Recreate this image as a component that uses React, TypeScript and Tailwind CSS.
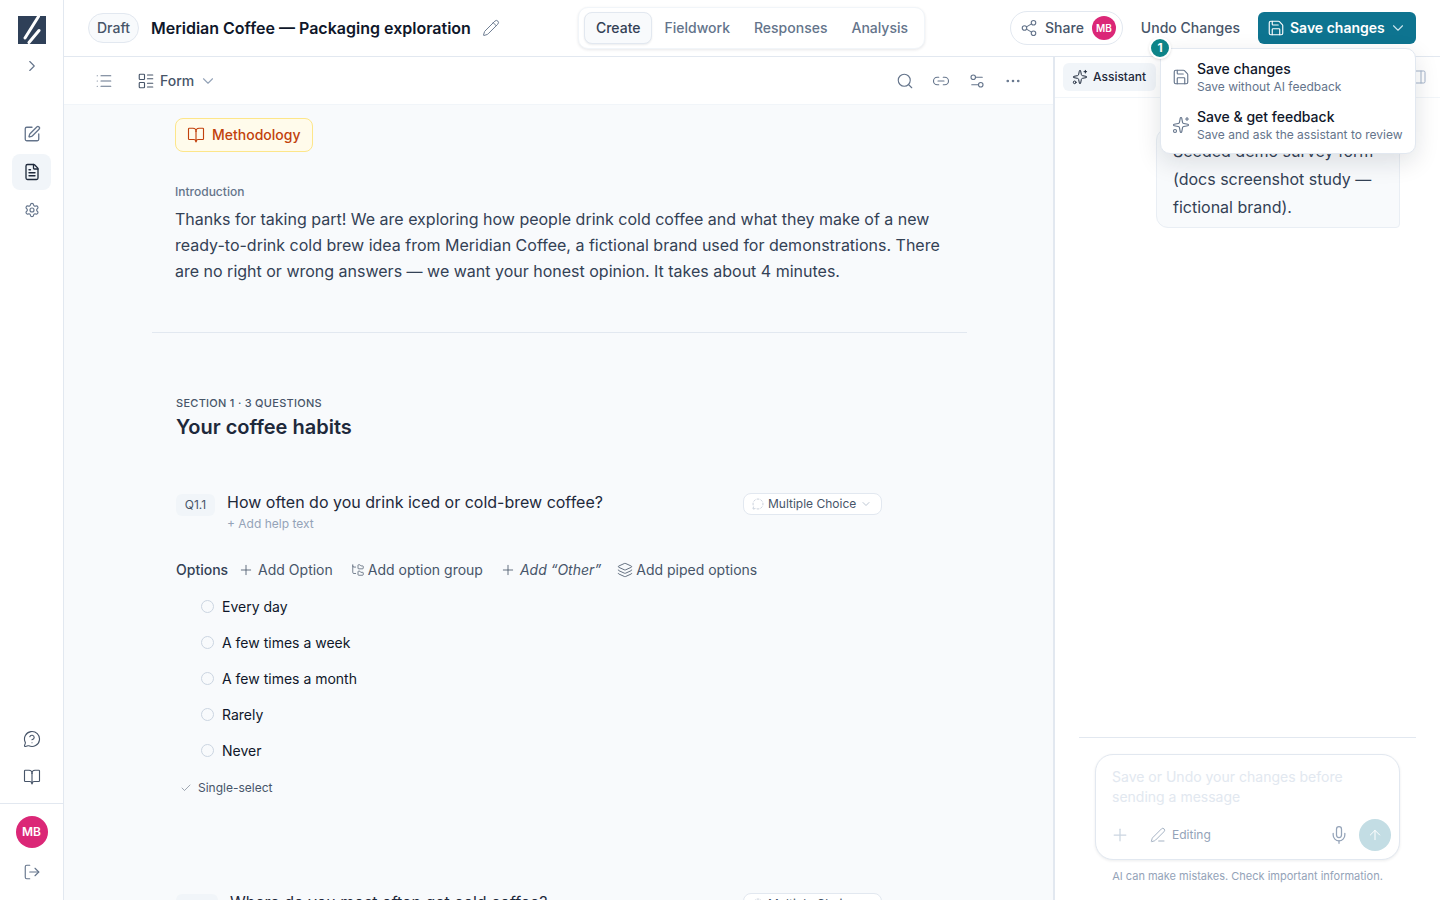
import {
  ArrowUp,
  BookOpen,
  Check,
  ChevronDown,
  ChevronRight,
  Ellipsis,
  FileText,
  FolderTree,
  Layers,
  LayoutList,
  Link2,
  List,
  LogOut,
  MessageCircleDashed,
  MessageCircleQuestion,
  Mic,
  PanelRight,
  PenLine,
  Pencil,
  Plus,
  Save,
  Search,
  Settings,
  Settings2,
  Share2,
  Sparkles,
  SquarePen,
} from "lucide-react";

const options = ["Every day", "A few times a week", "A few times a month", "Rarely", "Never"];

function Logo() {
  return (
    <svg width="28" height="28" viewBox="0 0 28 28" className="block">
      <rect width="28" height="28" fill="#2f4058" />
      <path d="M7 22 L20.5 0.5 M11 26.5 L21 14.5" stroke="#fff" strokeWidth="3" strokeLinecap="round" fill="none" />
    </svg>
  );
}

function Sidebar() {
  return (
    <aside className="flex h-full w-16 shrink-0 flex-col items-center border-r border-[#e2e8f0] bg-white">
      <div className="mt-4"><Logo /></div>
      <ChevronRight className="mt-[13px] h-[18px] w-[18px] text-[#64748b]" strokeWidth={1.5} />
      <div className="mt-[41px] flex flex-col items-center gap-[2px]">
        <div className="flex h-9 w-[39px] items-center justify-center">
          <SquarePen className="h-[18px] w-[18px] text-[#64748b]" strokeWidth={1.75} />
        </div>
        <div className="flex h-9 w-[39px] items-center justify-center rounded-lg bg-[#f1f5f9]">
          <FileText className="h-[18px] w-[18px] text-[#1e293b]" strokeWidth={1.75} />
        </div>
        <div className="flex h-9 w-[39px] items-center justify-center">
          <Settings className="h-4 w-4 text-[#64748b]" strokeWidth={1.75} />
        </div>
      </div>
      <div className="mt-auto flex flex-col items-center gap-5 pb-[17px]">
        <MessageCircleQuestion className="h-[18px] w-[18px] text-[#475569]" strokeWidth={1.5} />
        <BookOpen className="h-[18px] w-[18px] text-[#475569]" strokeWidth={1.5} />
      </div>
      <div className="flex h-[97px] w-full flex-col items-center border-t border-[#e2e8f0] pt-3">
        <div className="flex h-8 w-8 items-center justify-center rounded-full bg-[#db2777] text-xs font-semibold text-white">MB</div>
        <LogOut className="mt-[15px] h-[18px] w-[18px] text-[#64748b]" strokeWidth={1.5} />
      </div>
    </aside>
  );
}

function TopBar() {
  return (
    <header className="relative flex h-[57px] shrink-0 items-center border-b border-[#e2e8f0] bg-white pl-6 pr-6">
      <span className="flex h-[30px] items-center rounded-full border border-[#e2e8f0] bg-[#f8fafc] px-2 text-sm font-medium text-[#475569]">Draft</span>
      <h1 className="ml-3 text-base font-semibold text-[#0f172a]">Meridian Coffee — Packaging exploration</h1>
      <Pencil className="ml-[11px] h-[18px] w-[18px] text-[#64748b]" strokeWidth={1.25} />
      <nav className="ml-[78px] flex h-[42px] items-center rounded-[10px] border border-[#f1f5f9] bg-white pl-[5px] pr-[4px] text-sm font-medium text-[#64748b] shadow-[0_1px_3px_rgba(15,23,42,0.1)]">
        <span className="flex h-8 items-center rounded-lg border border-[#e2e8f0] bg-[#f8fafc] px-[11px] text-[#334155] shadow-[0_1px_2px_rgba(15,23,42,0.08)]">Create</span>
        <span className="px-3">Fieldwork</span>
        <span className="px-3">Responses</span>
        <span className="px-3">Analysis</span>
      </nav>
      <div className="ml-auto flex items-center">
        <div className="flex h-[34px] items-center rounded-full border border-[#e2e8f0] bg-white pl-[9px] pr-[6px] text-sm font-medium text-[#475569]">
          <Share2 className="h-[18px] w-[18px] text-[#64748b]" strokeWidth={1.5} />
          <span className="ml-[7px]">Share</span>
          <span className="ml-2 flex h-6 w-6 items-center justify-center rounded-full bg-[#db2777] text-[10px] font-semibold text-white">MB</span>
        </div>
        <span className="ml-[18px] text-sm font-medium text-[#475569]">Undo Changes</span>
        <button type="button" className="ml-[18px] flex h-8 w-[158px] items-center rounded-md bg-[#0e7490] pl-[9px] text-sm font-semibold text-white">
          <Save className="h-[18px] w-[18px]" strokeWidth={1.5} />
          <span className="ml-[5px]">Save changes</span>
          <ChevronDown className="ml-[4px] h-[18px] w-[18px] text-[#cbe4ec]" strokeWidth={1.5} />
        </button>
      </div>
    </header>
  );
}

function SaveMenu() {
  return (
    <div className="absolute right-6 top-[48px] z-20 h-[106px] w-[256px] rounded-[10px] border border-[#e2e8f0] bg-white px-[11px] pt-[4px] shadow-[0_8px_24px_rgba(15,23,42,0.12)]">
      <span className="absolute -left-[12px] -top-[12px] flex h-[22px] w-[22px] items-center justify-center rounded-full border-2 border-white bg-[#0d8488] text-xs font-bold text-white shadow">1</span>
      <div className="flex h-12 items-center">
        <Save className="h-[18px] w-[18px] shrink-0 text-[#64748b]" strokeWidth={1.5} />
        <div className="ml-[7px]">
          <p className="text-sm font-medium leading-[18px] text-[#0f172a]">Save changes</p>
          <p className="mt-[1px] text-xs leading-[15px] text-[#64748b]">Save without AI feedback</p>
        </div>
      </div>
      <div className="flex h-12 items-center">
        <Sparkles className="h-[18px] w-[18px] shrink-0 text-[#64748b]" strokeWidth={1.5} />
        <div className="ml-[7px]">
          <p className="text-sm font-medium leading-[18px] text-[#0f172a]">Save &amp; get feedback</p>
          <p className="mt-[1px] whitespace-nowrap text-xs leading-[15px] text-[#64748b]">Save and ask the assistant to review</p>
        </div>
      </div>
    </div>
  );
}

function Toolbar() {
  return (
    <div className="flex h-12 shrink-0 items-center border-b border-[#f1f5f9] bg-white pl-[31px] pr-[31px]">
      <List className="h-[18px] w-[18px] text-[#64748b]" strokeWidth={1.5} />
      <LayoutList className="ml-6 h-[18px] w-[18px] text-[#475569]" strokeWidth={1.5} />
      <span className="ml-[5px] text-sm font-medium text-[#475569]">Form</span>
      <ChevronDown className="ml-[5px] h-[18px] w-[18px] text-[#94a3b8]" strokeWidth={1.5} />
      <div className="ml-auto flex items-center gap-[18px] text-[#64748b]">
        <Search className="h-[18px] w-[18px]" strokeWidth={1.5} />
        <Link2 className="h-[18px] w-[18px]" strokeWidth={1.5} />
        <Settings2 className="h-[18px] w-[18px]" strokeWidth={1.5} />
        <Ellipsis className="h-[18px] w-[18px]" strokeWidth={1.5} />
      </div>
    </div>
  );
}

function TypeSelect() {
  return (
    <div className="flex h-[22px] w-[139px] shrink-0 items-center rounded-lg border border-[#e2e8f0] bg-white pl-2 text-xs text-[#475569]">
      <MessageCircleDashed className="h-3 w-3 text-[#94a3b8]" strokeWidth={1} />
      <span className="ml-[4px]">Multiple Choice</span>
      <ChevronDown className="ml-1 h-3 w-3 text-[#94a3b8]" strokeWidth={1.25} />
    </div>
  );
}

function FormPane() {
  return (
    <div className="flex min-w-0 flex-1 flex-col overflow-hidden bg-[#f8fafc]">
      <Toolbar />
      <div className="min-h-0 flex-1 overflow-hidden pl-[88px]">
        <div className="w-[815px]">
          <div className="pl-[23px] pt-[13px]">
            <span className="inline-flex h-[34px] items-center rounded-lg border border-[#fde68a] bg-[#fffbeb] pl-[11px] pr-3 text-sm font-medium text-[#c2410c]">
              <BookOpen className="h-[18px] w-[18px]" strokeWidth={1.5} />
              <span className="ml-[7px]">Methodology</span>
            </span>
            <p className="mt-[32px] text-xs font-medium leading-4 text-[#64748b]">Introduction</p>
            <p className="mt-[6px] w-[780px] text-base leading-[26px] text-[#334155]">
              Thanks for taking part! We are exploring how people drink cold coffee and what they make of a new ready-to-drink cold brew idea from Meridian Coffee, a fictional brand used for demonstrations. There are no right or wrong answers — we want your honest opinion. It takes about 4 minutes.
            </p>
          </div>
          <div className="mt-[48px] border-t border-[#e2e8f0]" />
          <div className="pl-6 pt-[64px]">
            <p className="text-[11px] font-medium uppercase leading-3 tracking-[0.025em] text-[#475569]">Section 1 · 3 questions</p>
            <h2 className="mt-[4px] text-xl font-semibold leading-7 text-[#1e293b]">Your coffee habits</h2>

            <div className="mt-[49px] flex w-[706px] items-start">
              <span className="mt-[4px] flex h-[22px] w-[39px] shrink-0 items-center justify-center rounded-md bg-[#f1f5f9] text-xs text-[#475569]">Q1.1</span>
              <div className="ml-3 flex-1">
                <p className="text-base leading-6 text-[#1e293b]">How often do you drink iced or cold-brew coffee?</p>
                <p className="mt-[2px] text-xs leading-4 text-[#94a3b8]">+ Add help text</p>
              </div>
              <div className="mt-[3px]"><TypeSelect /></div>
            </div>

            <div className="mt-[28px] flex h-5 items-center text-sm text-[#475569]">
              <span className="font-medium text-[#334155]">Options</span>
              <Plus className="ml-[10px] h-4 w-4" strokeWidth={1.25} />
              <span className="ml-[4px]">Add Option</span>
              <FolderTree className="ml-[18px] h-[14px] w-[14px]" strokeWidth={1.25} />
              <span className="ml-[3px]">Add option group</span>
              <Plus className="ml-[17px] h-4 w-4" strokeWidth={1.25} />
              <span className="ml-[4px] italic">Add “Other”</span>
              <Layers className="ml-[16px] h-4 w-4" strokeWidth={1.25} />
              <span className="ml-[3px]">Add piped options</span>
            </div>

            <ul className="mt-[9px] pl-[25px]">
              {options.map((o) => (
                <li key={o} className="flex h-9 items-center">
                  <span className="-mt-[2px] h-[13px] w-[13px] rounded-full border border-[#cbd5e1]" />
                  <span className="ml-[8px] text-sm text-[#0f172a]">{o}</span>
                </li>
              ))}
            </ul>

            <div className="mt-[9px] flex h-5 items-center pl-1 text-xs text-[#475569]">
              <Check className="h-3 w-3" strokeWidth={1} />
              <span className="ml-[6px]">Single-select</span>
            </div>

            <div className="mt-[92px] flex w-[706px] items-start">
              <span className="mt-[4px] flex h-[22px] w-[42px] shrink-0 items-center justify-center rounded-md bg-[#f1f5f9] text-xs text-[#475569]">Q1.2</span>
              <div className="ml-3 flex-1">
                <p className="text-base leading-6 text-[#1e293b]">Where do you most often get cold coffee?</p>
              </div>
              <div className="mt-[3px]"><TypeSelect /></div>
            </div>
          </div>
        </div>
      </div>
    </div>
  );
}

function AssistantPane() {
  return (
    <section className="flex h-full w-[387px] shrink-0 flex-col border-l-2 border-[#e2e8f0] bg-white">
      <div className="flex h-[41px] shrink-0 items-center justify-between border-b border-[#f1f5f9] pl-2 pr-[13px]">
        <span className="flex h-7 items-center rounded-md bg-[#f1f5f9] pl-[9px] pr-[10px] text-xs font-medium text-[#1e293b]">
          <Sparkles className="h-4 w-4" strokeWidth={1.5} />
          <span className="ml-[5px]">Assistant</span>
        </span>
        <PanelRight className="h-4 w-4 text-[#a3b3c9]" strokeWidth={1.5} />
      </div>
      <div className="flex-1 pr-10 pt-[30px]">
        <div className="ml-auto w-[244px] rounded-xl rounded-br-sm border border-[#e9eef4] bg-[#f8fafc] px-4 pb-[6px] pt-2 text-base leading-[28px] text-[#334155]">
          Seeded demo survey form (docs screenshot study — fictional brand).
        </div>
      </div>
      <div className="mx-6 border-t border-[#e2e8f0] pl-4 pr-4 pt-4">
        <div className="h-[106px] rounded-[18px] border border-[#e2e8f0] bg-white shadow-[0_1px_3px_rgba(15,23,42,0.08)]">
          <p className="px-4 pt-3 text-sm leading-5 text-[#e2e8f0]">Save or Undo your changes before sending a message</p>
          <div className="mt-3 flex items-center pl-[14px] pr-2">
            <Plus className="h-5 w-5 text-[#cbd5e1]" strokeWidth={1.5} />
            <PenLine className="ml-5 h-4 w-4 text-[#94a3b8]" strokeWidth={1.25} />
            <span className="ml-[6px] text-xs text-[#94a3b8]">Editing</span>
            <Mic className="ml-auto h-5 w-5 text-[#94a3b8]" strokeWidth={1.5} />
            <span className="ml-[10px] flex h-8 w-8 items-center justify-center rounded-full bg-[#c3dde4]">
              <ArrowUp className="h-4 w-4 text-white" strokeWidth={1.5} />
            </span>
          </div>
        </div>
        <p className="mt-[9px] whitespace-nowrap pb-[17px] text-center text-[11px] leading-[14px] text-[#94a3b8]">AI can make mistakes. Check important information.</p>
      </div>
    </section>
  );
}

export default function App() {
  return (
    <div className="relative flex h-[900px] w-[1440px] overflow-hidden bg-white font-['Inter',sans-serif]">
      <Sidebar />
      <div className="flex min-w-0 flex-1 flex-col">
        <TopBar />
        <div className="flex min-h-0 flex-1">
          <FormPane />
          <AssistantPane />
        </div>
      </div>
      <SaveMenu />
    </div>
  );
}
